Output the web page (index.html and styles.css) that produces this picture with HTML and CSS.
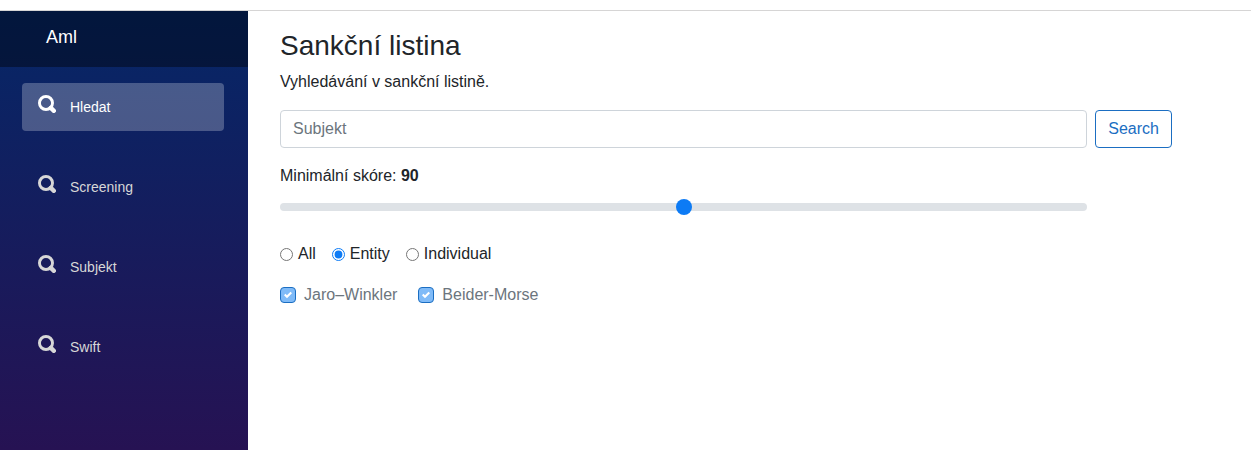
FILE: index.html
```html
<!DOCTYPE html>
<html lang="cs">
<head>
  <meta charset="UTF-8" />
  <meta name="viewport" content="width=device-width, initial-scale=1" />
  <title>Aml</title>
  <link rel="stylesheet" href="styles.css">
</head>
<body>
  <svg class="icon-defs" aria-hidden="true">
    <symbol id="magnifier" viewBox="0 0 8 8">
      <circle cx="3.55" cy="3.55" r="2.9" fill="none" stroke="currentColor" stroke-width="1.3" />
      <path d="M5.7 5.7l1.3 1.3" fill="none" stroke="currentColor" stroke-width="2" stroke-linecap="round" />
    </symbol>
  </svg>

  <div class="page">
    <div class="sidebar">
      <div class="top-row">
        <a class="brand" href="#">Aml</a>
      </div>
      <nav class="menu">
        <a class="nav-link active" href="#hledat"><svg class="icon"><use href="#magnifier" /></svg>Hledat</a>
        <a class="nav-link" href="#screening"><svg class="icon"><use href="#magnifier" /></svg>Screening</a>
        <a class="nav-link" href="#subjekt"><svg class="icon"><use href="#magnifier" /></svg>Subjekt</a>
        <a class="nav-link" href="#swift"><svg class="icon"><use href="#magnifier" /></svg>Swift</a>
      </nav>
    </div>

    <main class="content">
      <h3>Sankční listina</h3>
      <p class="intro">Vyhledávání v sankční listině.</p>

      <form class="search-form">
        <input class="text-input" type="text" placeholder="Subjekt" aria-label="Subjekt">
        <button class="btn" type="button">Search</button>

        <div class="score">
          <label for="score">Minimální skóre: <strong>90</strong></label>
          <input class="range" id="score" type="range" min="80" max="100" value="90">
        </div>
      </form>

      <div class="radios">
        <label><input type="radio" name="type">All</label>
        <label><input type="radio" name="type" checked>Entity</label>
        <label><input type="radio" name="type">Individual</label>
      </div>

      <div class="checks">
        <label><input type="checkbox" checked disabled>Jaro–Winkler</label>
        <label><input type="checkbox" checked disabled>Beider-Morse</label>
      </div>
    </main>
  </div>
</body>
</html>
```

FILE: styles.css
```css
* {
  box-sizing: border-box;
}

body {
  margin: 0;
  padding-top: 10px;
  font-family: "Liberation Sans", Arial, sans-serif;
  font-size: 16px;
  line-height: 24px;
  color: #212529;
  background: white;
}

.icon-defs {
  display: none;
}

.page {
  display: flex;
  min-height: calc(100vh - 10px);
  border-top: 1px solid #d6d5d5;
}

/* sidebar */
.sidebar {
  width: 248px;
  flex-shrink: 0;
  background: linear-gradient(180deg, rgb(5, 39, 103), rgb(38, 18, 83));
}

.top-row {
  height: 56px;
  padding: 14px 46px;
  background: rgba(0, 0, 0, 0.4);
}

.brand {
  color: white;
  font-size: 18px;
  text-decoration: none;
}

.menu {
  display: flex;
  flex-direction: column;
  gap: 32px;
  padding: 16px 24px 16px 22px;
}

.nav-link {
  display: flex;
  align-items: center;
  gap: 14px;
  height: 48px;
  padding: 0 16px;
  border-radius: 4px;
  color: #d7d7d7;
  font-size: 14px;
  text-decoration: none;
}

.nav-link.active {
  background: rgba(255, 255, 255, 0.25);
  color: white;
}

.icon {
  width: 18px;
  height: 18px;
  margin-bottom: 6px;
}

/* content */
.content {
  flex: 1;
  padding: 18px 79px 16px 32px;
}

h3 {
  margin: 0 0 8px;
  font-size: 28px;
  font-weight: 500;
  line-height: 33px;
}

.intro {
  margin: 0 0 16px;
}

.search-form {
  display: grid;
  grid-template-columns: 1fr auto;
  gap: 16px 8px;
}

.text-input,
.btn {
  height: 38px;
  padding: 6px 12px;
  border-radius: 4px;
  font: inherit;
  background: white;
}

.text-input {
  width: 100%;
  border: 1px solid #ced4da;
}

.text-input::placeholder {
  color: #6c757d;
}

.btn {
  border: 1px solid #1b6ec2;
  color: #1b6ec2;
  cursor: pointer;
}

.score {
  grid-column: 1;
}

.score label {
  display: block;
  margin-bottom: 7px;
}

.range {
  display: block;
  width: 100%;
  height: 24px;
  margin: 0;
  appearance: none;
  background: transparent;
}

.range::-webkit-slider-runnable-track {
  height: 8px;
  border-radius: 16px;
  background: #dee2e6;
}

.range::-webkit-slider-thumb {
  width: 16px;
  height: 16px;
  margin-top: -4px;
  appearance: none;
  border-radius: 50%;
  background: #0d7bf5;
}

.radios,
.checks {
  display: flex;
  flex-wrap: wrap;
}

.radios {
  gap: 16px;
  margin-top: 23px;
}

.radios label {
  display: flex;
  align-items: center;
  gap: 5px;
}

.radios input {
  width: 13px;
  height: 13px;
  margin: 0;
  accent-color: #0d7bf5;
}

.checks {
  gap: 21px;
  margin-top: 17px;
  color: #6c757d;
}

.checks label {
  display: flex;
  align-items: center;
  gap: 8px;
}

.checks input {
  width: 16px;
  height: 16px;
  margin: 0;
  appearance: none;
  border: 1px solid #1b6ec2;
  border-radius: 4px;
  background: #80bbf8 url("data:image/svg+xml,%3Csvg xmlns='http://www.w3.org/2000/svg' viewBox='0 0 8 8'%3E%3Cpath fill='white' d='M6.564.75l-3.59 3.612-1.538-1.55L0 4.26l2.974 2.99L8 2.193z'/%3E%3C/svg%3E") center / 8px no-repeat;
}
```
